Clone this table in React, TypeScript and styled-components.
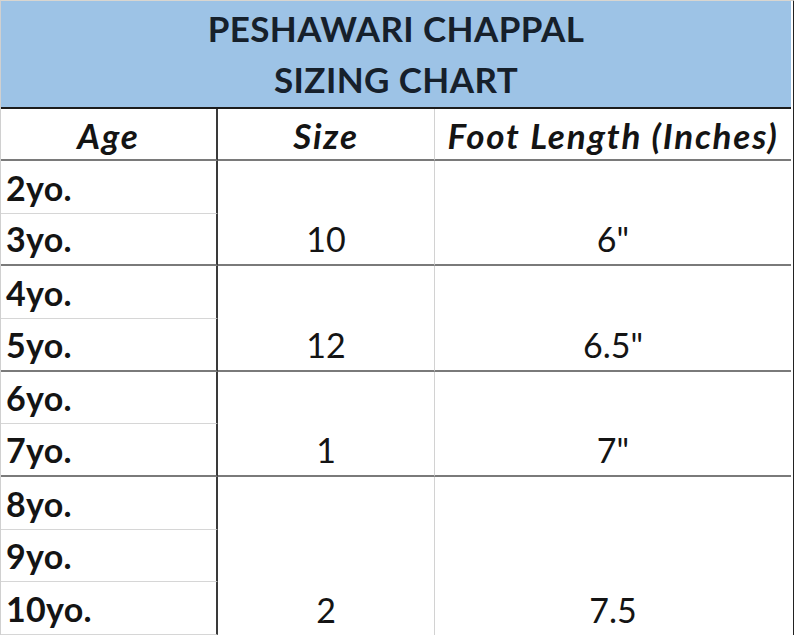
import { Fragment } from "react"
import styled, { createGlobalStyle } from "styled-components"

const GlobalStyle = createGlobalStyle`
    html, body {
        margin: 0;
        padding: 0;
        background: #fff;
    }
    body {
        font-family: Lato, "Open Sans", "Liberation Sans", sans-serif;
        color: #141414;
    }
`

const Sheet = styled.div`
    display: grid;
    grid-template-columns: 217px 217px 356px;
    grid-template-rows: 108px 52px repeat(9, 52.67px);
    width: 792px;
    border-top: 1px solid #d9d6d0;
    border-left: 1px solid #d0d0d0;
    border-right: 2px solid #222;
    border-bottom: 2px solid #222;
`

const Title = styled.div`
    grid-column: 1 / 4;
    background: #9dc3e6;
    border-bottom: 2px solid #1c1c1c;
    display: flex;
    flex-direction: column;
    align-items: center;
    justify-content: center;
    font-weight: 700;
    font-size: 35px;
    letter-spacing: 0.4px;
    line-height: 51px;
    color: #16202b;
    box-sizing: border-box;
`

const HeadCell = styled.div<{ $divider: "dark" | "light" | "none" }>`
    display: flex;
    align-items: center;
    justify-content: center;
    font-weight: 700;
    font-style: italic;
    font-size: 35px;
    letter-spacing: 1.8px;
    border-bottom: 2px solid #7a7a7a;
    border-right: ${p =>
        p.$divider === "dark" ? "2px solid #3a3a3a" : p.$divider === "light" ? "1px solid #d2d2d2" : "none"};
    box-sizing: border-box;
    padding-top: 2px;
`

const AgeCell = styled.div<{ $groupEnd: boolean }>`
    display: flex;
    align-items: flex-end;
    padding: 0 0 8px 5px;
    font-weight: 700;
    font-size: 34px;
    letter-spacing: 0.3px;
    line-height: 1;
    border-right: 2px solid #3a3a3a;
    border-bottom: ${p => (p.$groupEnd ? "2px solid #7a7a7a" : "1px solid #d6d6d6")};
    box-sizing: border-box;
`

const ValueCell = styled.div<{ $last: boolean; $light: boolean }>`
    display: flex;
    align-items: flex-end;
    justify-content: center;
    padding-bottom: 8px;
    font-size: 34px;
    line-height: 1;
    border-right: ${p => (p.$light ? "1px solid #d2d2d2" : "none")};
    border-bottom: ${p => (p.$last ? "none" : "2px solid #7a7a7a")};
    box-sizing: border-box;
`

const groups = [
    { ages: ["2yo.", "3yo."], size: "10", length: '6"' },
    { ages: ["4yo.", "5yo."], size: "12", length: '6.5"' },
    { ages: ["6yo.", "7yo."], size: "1", length: '7"' },
    { ages: ["8yo.", "9yo.", "10yo."], size: "2", length: "7.5" },
]

const App = () => {
    let row = 3
    return (
        <>
            <GlobalStyle />
            <Sheet>
                <Title>
                    <span>PESHAWARI CHAPPAL</span>
                    <span>SIZING CHART</span>
                </Title>
                <HeadCell $divider="dark">Age</HeadCell>
                <HeadCell $divider="light">Size</HeadCell>
                <HeadCell $divider="none">Foot Length (Inches)</HeadCell>
                {groups.map((g, gi) => {
                    const start = row
                    row += g.ages.length
                    const last = gi === groups.length - 1
                    const span = `${start} / span ${g.ages.length}`
                    return (
                        <Fragment key={g.size}>
                            {g.ages.map((age, ai) => (
                                <AgeCell
                                    key={age}
                                    $groupEnd={ai === g.ages.length - 1 && !last}
                                    style={{ gridRow: start + ai, gridColumn: 1 }}
                                >
                                    {age}
                                </AgeCell>
                            ))}
                            <ValueCell $last={last} $light style={{ gridRow: span, gridColumn: 2 }}>
                                {g.size}
                            </ValueCell>
                            <ValueCell $last={last} $light={false} style={{ gridRow: span, gridColumn: 3 }}>
                                {g.length}
                            </ValueCell>
                        </Fragment>
                    )
                })}
            </Sheet>
        </>
    )
}

export default App
